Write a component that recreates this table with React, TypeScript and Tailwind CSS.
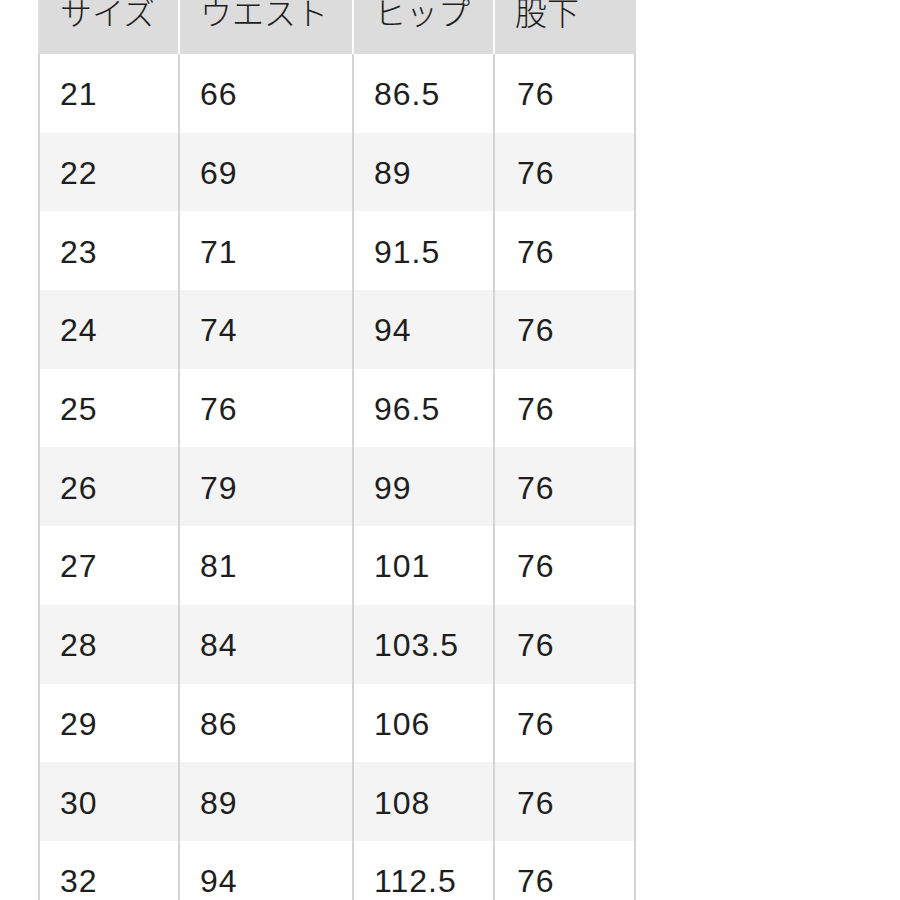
const headers = ["サイズ", "ウエスト", "ヒップ", "股下"];

const rows: [string, string, string, string][] = [
  ["21", "66", "86.5", "76"],
  ["22", "69", "89", "76"],
  ["23", "71", "91.5", "76"],
  ["24", "74", "94", "76"],
  ["25", "76", "96.5", "76"],
  ["26", "79", "99", "76"],
  ["27", "81", "101", "76"],
  ["28", "84", "103.5", "76"],
  ["29", "86", "106", "76"],
  ["30", "89", "108", "76"],
  ["32", "94", "112.5", "76"],
];

const widths = ["w-[138px]", "w-[172px]", "w-[139px]", "w-[139px]"];
const headWidths = ["w-[140px]", "w-[172px]", "w-[139px]", "w-[141px]"];

export default function App() {
  return (
    <div
      className="h-[900px] w-[900px] overflow-hidden bg-white text-[#1e1e1e]"
      style={{ fontFamily: '"Liberation Sans", "Noto Sans CJK JP", sans-serif' }}
    >
      <div className="ml-[38px] flex w-[598px] flex-col">
        {/* header row, partly scrolled off the top */}
        <div className="flex h-[54px] gap-[2px] bg-white">
          {headers.map((h, i) => (
            <div
              key={h}
              className={`${headWidths[i]} flex items-end overflow-hidden bg-[#dcdcdc] pb-[24px] ${i === 0 ? "pl-[22px]" : "pl-[20px]"} text-[32px] font-light leading-none`}
            >
              {h}
            </div>
          ))}
        </div>
        {rows.map((r, ri) => (
          <div key={r[0]} className="flex h-[78.7px] gap-[2px] bg-[#d4d4d4] px-[2px]">
            {r.map((c, ci) => (
              <div
                key={ci}
                className={`${widths[ci]} flex items-center ${ri % 2 === 0 ? "bg-white" : "bg-[#f4f4f4]"} ${ci === 3 ? "pl-[22px]" : "pl-[20px]"} pt-[2px] text-[32px] tracking-[1px]`}
              >
                {c}
              </div>
            ))}
          </div>
        ))}
      </div>
    </div>
  );
}
